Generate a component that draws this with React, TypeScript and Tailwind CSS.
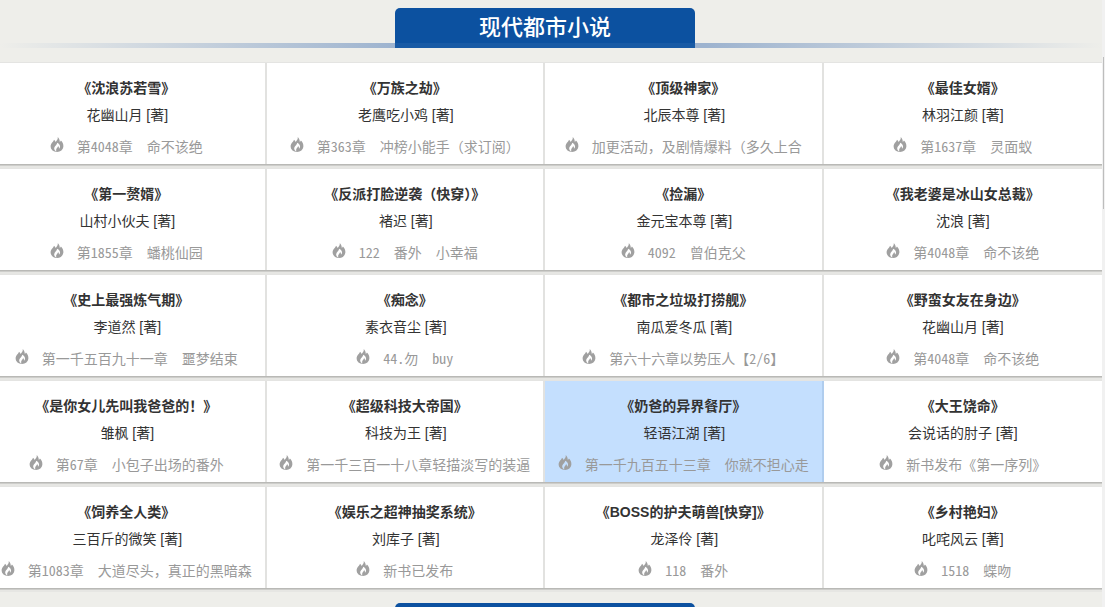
import React from 'react';

type Book = { title: string; author: string; meta: string; active?: boolean };

const books: Book[] = [
  { title: '《沈浪苏若雪》', author: '花幽山月', meta: '第4048章  命不该绝' },
  { title: '《万族之劫》', author: '老鹰吃小鸡', meta: '第363章  冲榜小能手（求订阅）' },
  { title: '《顶级神家》', author: '北辰本尊', meta: '加更活动，及剧情爆料（多久上合' },
  { title: '《最佳女婿》', author: '林羽江颜', meta: '第1637章  灵面蚁' },
  { title: '《第一赘婿》', author: '山村小伙夫', meta: '第1855章  蟠桃仙园' },
  { title: '《反派打脸逆袭（快穿）》', author: '褚迟', meta: '122  番外  小幸福' },
  { title: '《捡漏》', author: '金元宝本尊', meta: '4092  曾伯克父' },
  { title: '《我老婆是冰山女总裁》', author: '沈浪', meta: '第4048章  命不该绝' },
  { title: '《史上最强炼气期》', author: '李道然', meta: '第一千五百九十一章  噩梦结束' },
  { title: '《痴念》', author: '素衣音尘', meta: '44.勿  buy' },
  { title: '《都市之垃圾打捞舰》', author: '南瓜爱冬瓜', meta: '第六十六章以势压人【2/6】' },
  { title: '《野蛮女友在身边》', author: '花幽山月', meta: '第4048章  命不该绝' },
  { title: '《是你女儿先叫我爸爸的！》', author: '雏枫', meta: '第67章  小包子出场的番外' },
  { title: '《超级科技大帝国》', author: '科技为王', meta: '第一千三百一十八章轻描淡写的装逼' },
  { title: '《奶爸的异界餐厅》', author: '轻语江湖', meta: '第一千九百五十三章  你就不担心走', active: true },
  { title: '《大王饶命》', author: '会说话的肘子', meta: '新书发布《第一序列》' },
  { title: '《饲养全人类》', author: '三百斤的微笑', meta: '第1083章  大道尽头，真正的黑暗森' },
  { title: '《娱乐之超神抽奖系统》', author: '刘库子', meta: '新书已发布' },
  { title: '《BOSS的护夫萌兽[快穿]》', author: '龙泽伶', meta: '118  番外' },
  { title: '《乡村艳妇》', author: '叱咤风云', meta: '1518  蝶吻' },
];

const Flame = () => (
  <svg viewBox="0 0 14 16" className="w-[14px] h-[15px] shrink-0 -mt-[3px]">
    <path
      fillRule="evenodd"
      fill="#a0a0a0"
      d="M7.8 0C9.5 1.8 10 3.4 10 5.2 10.5 4.9 11 4.4 11.2 3.8 13 5.5 14 7.8 13.8 10.2 13.5 13.5 10.8 16 7 16 3.2 16 .3 13.5.2 10.2 0 8 1.2 6.4 2.6 5 3.2 4.4 3.6 3.6 3.8 3 4.6 3.6 5.2 4.3 5.6 5.2 6.8 3.8 8.2 2.2 7.8 0ZM7 6C7.5 8 4.2 9.5 4 12 3.9 13.6 5 15 6.4 15.4 5.8 14 6 12.8 7 11.6 7.6 10.9 8 10.2 8.2 9.5 9 10.4 9.3 11.4 9 12.6 10 11.8 10.4 10.8 10.2 9.6 10 8 8.6 6.6 7 6Z"
    />
  </svg>
);

const SectionHeading = ({ title }: { title?: string }) => (
  <div className="relative h-10">
    <div className="absolute left-0 right-0 bottom-0 h-[5px] bg-[linear-gradient(to_right,#eeeeea,#9db3cf_36%,#9db3cf_64%,#eeeeea)]" />
    <div className="relative w-[1090px] flex justify-center">
      <h2 className="relative w-[300px] h-10 bg-[#0c51a0] rounded-t-[5px] text-center text-white text-[22px] leading-[40px] font-medium">
        {title}
        <span className="absolute left-0 right-0 bottom-0 h-[5px] bg-white/5" />
      </h2>
    </div>
  </div>
);

const BookCard = ({ book, lastInRow }: { book: Book; lastInRow: boolean }) => (
  <div
    className={`h-[101px] pt-[15px] text-center shadow-[0_1px_0_#b9b9b6,0_2px_0_#cdcdca,0_4px_0_#e6e6e3,0_-1px_0_#e4e4e2] overflow-hidden ${
      book.active ? 'bg-[#c4dffe] border-r-[#b0cdee]' : 'bg-white border-r-[#e2e2e0]'
    } ${lastInRow ? '' : 'border-r-2'}`}
  >
    <div className="text-sm leading-5 font-bold text-[#333]">{book.title}</div>
    <div className={`mt-[7px] text-sm leading-5 text-[#333] ${lastInRow ? '' : 'pl-[2px]'}`}>{book.author} [著]</div>
    <div className="mt-[11px] flex justify-center items-center gap-[13px] px-2 text-sm leading-5 text-[#999] font-['Noto_Sans_Mono_CJK_SC','Noto_Sans_CJK_SC',monospace] whitespace-pre">
      <Flame />
      <span>{book.meta}</span>
    </div>
  </div>
);

export default function App() {
  return (
    <div className="h-[607px] flex overflow-hidden bg-[#eeeeea] font-['Liberation_Sans','Noto_Sans_CJK_SC',sans-serif]">
      <main className="w-[1102px] shrink-0 pt-2">
        <SectionHeading title="现代都市小说" />
        <div className="mt-[15px] -ml-3 w-[1114px] grid grid-cols-4 gap-y-[5px]">
          {books.map((book, i) => (
            <BookCard key={book.title} book={book} lastInRow={i % 4 === 3} />
          ))}
        </div>
        <div className="mt-[15px]">
          <SectionHeading />
        </div>
      </main>
      <aside className="relative z-10 flex-1 bg-[#f1f1f1] pt-[57px] pl-[1px]">
        <div className="w-[1px] h-[152px] bg-[#bdbdbd]" />
      </aside>
    </div>
  );
}
